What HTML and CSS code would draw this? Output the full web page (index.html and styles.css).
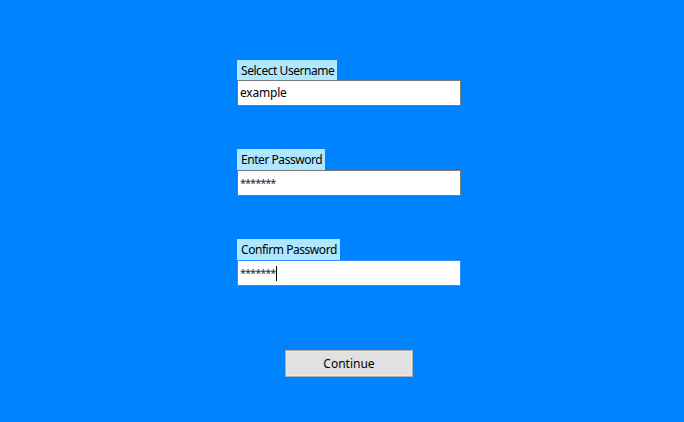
FILE: index.html
```html
<!DOCTYPE html>
<html>
<head>
<meta charset="utf-8">
<link rel="stylesheet" href="styles.css">
</head>
<body>
<div class="form">
  <div class="field">
    <span class="label">Selcect Username</span>
    <div class="input">example</div>
  </div>
  <div class="field">
    <span class="label">Enter Password</span>
    <div class="input pw">*******</div>
  </div>
  <div class="field">
    <span class="label">Confirm Password</span>
    <div class="input pw focus">*******<span class="caret"></span></div>
  </div>
  <div class="actions">
    <button class="btn">Continue</button>
  </div>
</div>
</body>
</html>
```
FILE: styles.css
```css
html, body {
  margin: 0;
  padding: 0;
  width: 684px;
  height: 422px;
  background: #0083ff;
  overflow: hidden;
}
.form {
  display: flex;
  flex-direction: column;
  width: 224px;
  margin: 60px 0 0 237px;
  font-family: "Noto Sans", sans-serif;
  font-size: 12px;
  color: #000;
}
.field {
  display: flex;
  flex-direction: column;
  align-items: flex-start;
  margin-bottom: 43px;
}
.label {
  background: #aee7ff;
  height: 21px;
  line-height: 22px;
  padding: 0 3px 0 4px;
  letter-spacing: -0.45px;
}
.field:first-child .label {
  height: 20px;
  line-height: 21px;
}
.input {
  box-sizing: border-box;
  width: 224px;
  height: 26px;
  background: #fff;
  border: 1px solid #7a7a7a;
  line-height: 24px;
  padding-left: 2px;
  display: flex;
  align-items: center;
  letter-spacing: -0.2px;
}
.input.pw {
  font-size: 11px;
  letter-spacing: -1px;
  color: #1a2a4a;
}
.input.focus {
  border-color: #2a8fff;
}
.caret {
  display: inline-block;
  width: 1px;
  height: 15px;
  background: #000;
  margin-left: 1px;
}
.actions {
  display: flex;
  justify-content: center;
  margin-top: 21px;
}
.btn {
  box-sizing: border-box;
  width: 128px;
  height: 27px;
  background: #e1e1e1;
  border: 1px solid #adadad;
  box-shadow: inset 0 0 0 1px #e9e9e9;
  font-family: "Noto Sans", sans-serif;
  font-size: 12px;
  color: #000;
  padding: 0;
}
```
